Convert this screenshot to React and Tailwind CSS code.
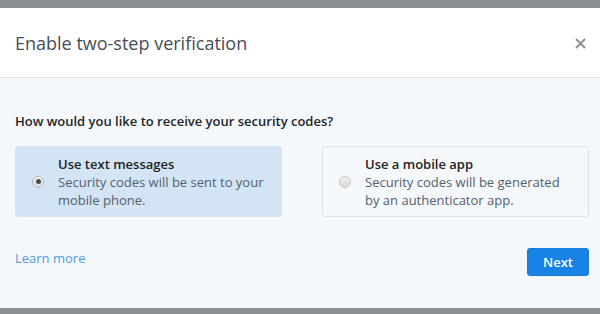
import React from "react";

const Radio = ({ checked }) => (
  <span
    className={`w-[12px] h-[12px] rounded-full border flex items-center justify-center shrink-0 ${
      checked
        ? "border-[#b5b9bd] bg-gradient-to-b from-[#f4f4f4] to-[#dcdcdc]"
        : "border-[#c4c7ca] bg-gradient-to-b from-[#f2f2f2] to-[#d8d8d8]"
    }`}
  >
    {checked && <span className="w-[5px] h-[5px] rounded-full bg-[#4a4a4a]" />}
  </span>
);

const Option = ({ title, desc, checked }) => (
  <div
    className={`flex-1 h-[71px] rounded-[3px] border flex items-center pl-[16px] pr-3 ${
      checked ? "bg-[#d3e5f4] border-[#d3e5f4]" : "bg-[#f5f8fb] border-[#d6e5f3]"
    }`}
  >
    <Radio checked={checked} />
    <div className="ml-[14px] text-[13px] leading-[18px] pt-[1px]">
      <p className="font-semibold text-[#1c1f23]">{title}</p>
      <p className="text-[#53606e] w-[210px]">{desc}</p>
    </div>
  </div>
);

export default function App() {
  return (
    <div
      className="w-[600px] h-[314px] bg-[#8a8f93] flex flex-col overflow-hidden"
      style={{ fontFamily: '"Open Sans", "Noto Sans", sans-serif' }}
    >
      <div className="h-[8px] shrink-0" />
      {/* Header */}
      <div className="h-[70px] shrink-0 bg-white border-b border-[#dfe3e7] flex items-center justify-between pl-[15px] pr-[10px]">
        <h2 className="text-[18px] text-[#474e57] pt-[1px]">Enable two-step verification</h2>
        <svg width="11" height="11" viewBox="0 0 11 11" className="mr-[4px] mt-[2px]">
          <path d="M1 1 L10 10 M10 1 L1 10" stroke="#8c8c8c" strokeWidth="1.8" />
        </svg>
      </div>
      {/* Body */}
      <div className="h-[230px] shrink-0 bg-[#f5f8fb] pl-[15px] pr-[11px] pt-[34px]">
        <p className="text-[13px] leading-[18px] font-semibold text-[#22262b]">
          How would you like to receive your security codes?
        </p>
        <div className="flex gap-[40px] mt-[16px]">
          <Option
            checked
            title="Use text messages"
            desc="Security codes will be sent to your mobile phone."
          />
          <Option
            title="Use a mobile app"
            desc="Security codes will be generated by an authenticator app."
          />
        </div>
        <div className="flex items-start justify-between mt-[31px]">
          <a className="text-[13px] leading-[18px] mt-[1px] text-[#4d9ce6]">Learn more</a>
          <button className="w-[62px] h-[28px] rounded-[3px] bg-[#1783e5] border border-[#1a7cd6] text-white text-[13px] font-semibold pt-[1px]">
            Next
          </button>
        </div>
      </div>
    </div>
  );
}
